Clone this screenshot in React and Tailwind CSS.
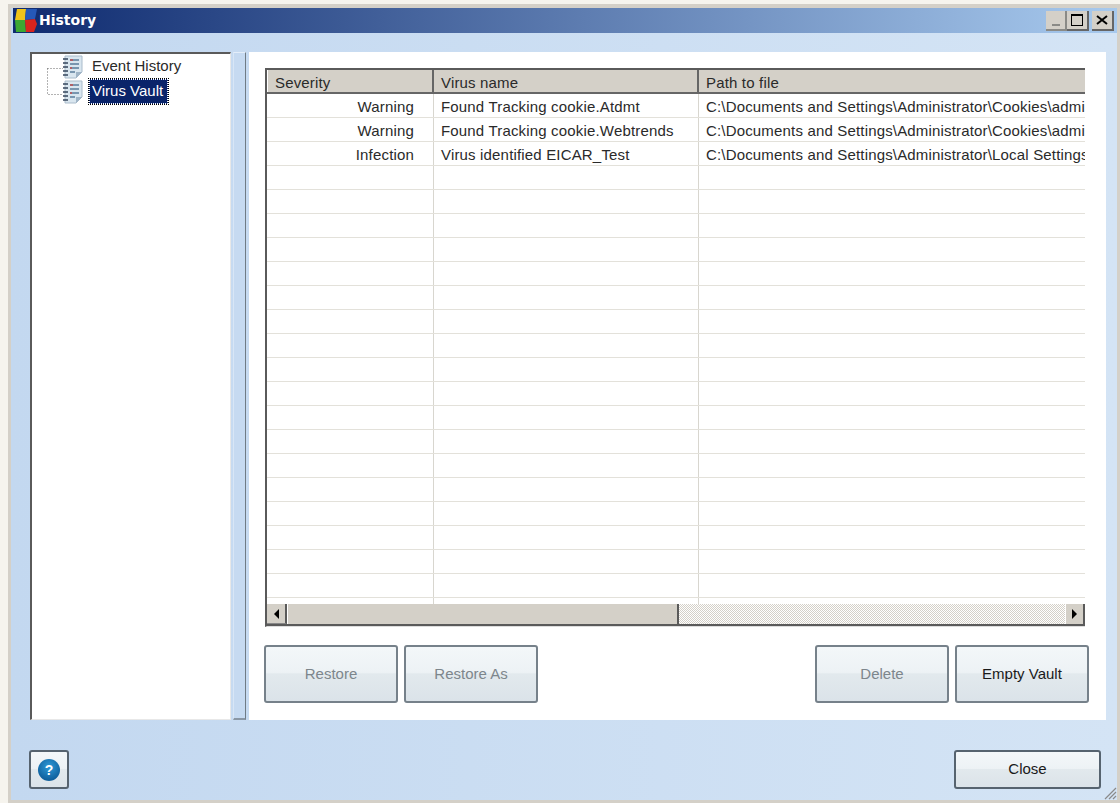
import { useState } from 'react'

const rows = [
    { severity: 'Warning', name: 'Found Tracking cookie.Atdmt', path: 'C:\\Documents and Settings\\Administrator\\Cookies\\admi' },
    { severity: 'Warning', name: 'Found Tracking cookie.Webtrends', path: 'C:\\Documents and Settings\\Administrator\\Cookies\\admi' },
    { severity: 'Infection', name: 'Virus identified EICAR_Test', path: 'C:\\Documents and Settings\\Administrator\\Local Settings' },
]

const emptyRows = Array.from({ length: 19 }, (_, i) => i)

const glossy = 'bg-[linear-gradient(#f3f7f9_0%,#edf2f5_47%,#e2e9ed_50%,#dbe3e9_100%)]'

function NoteIcon() {
    return (
        <svg width="21" height="24" viewBox="0 0 21 24" className="shrink-0">
            <path d="M3 1h17v16l-6 6H3z" fill="#d9e6ef" stroke="#a9bbca" />
            <path d="M14 23v-6h6z" fill="#9fb4c6" />
            <path d="M8 5h9M8 9h9M8 13h9M8 17h5" stroke="#5a7c9a" strokeWidth="1.4" />
            <path d="M8 5h3M8 13h2" stroke="#c25050" strokeWidth="1.4" />
            <path d="M1 4h5M1 8h5M1 12h5M1 16h5M1 20h5" stroke="#34465c" strokeWidth="1.6" />
        </svg>
    )
}

function Logo() {
    return (
        <svg width="22" height="23" viewBox="0 0 22 23" className="shrink-0">
            <path d="M2 0h9l-1 11H0z" fill="#f0c419" />
            <path d="M11 0h11l-2 10-10 1z" fill="#2558b8" />
            <path d="M0 11h10l1 12H1z" fill="#3ca832" />
            <path d="M10 11l10-1 2 5-3 8h-8z" fill="#d9241e" />
        </svg>
    )
}

function ActionButton({ label, disabled }) {
    return (
        <button className={`w-[134px] h-[58px] rounded-[3px] border-2 border-[#76818a] ${glossy} text-[15px] ${disabled ? 'text-[#7d868c]' : 'text-[#1a1a1a]'}`}>
            {label}
        </button>
    )
}

export default function App() {
    const [selected, setSelected] = useState('Virus Vault')

    return (
        <div className="w-[1120px] h-[803px] overflow-hidden bg-[#f6f4ee] pt-1 pl-2 font-['Liberation_Sans',sans-serif] text-[15px] text-[#2a2a2a]">
            <div className="w-[1112px] h-[799px] flex flex-col bg-[#d4d0c8] pt-1 pl-[3px] pr-[3px] pb-[3px]">
                <div className="flex-1 flex flex-col bg-[linear-gradient(90deg,#c3d8f0,#d4e4f5)] relative min-h-0">
                    {/* Title bar */}
                    <div className="h-[25px] ml-[2px] flex items-center justify-between bg-[linear-gradient(90deg,#0e2a6f_0%,#a8caee_100%)]">
                        <div className="flex items-center pl-[2px]">
                            <Logo />
                            <span className="ml-[2px] font-['DejaVu_Sans',sans-serif] font-bold text-[14px] text-white">History</span>
                        </div>
                        <div className="flex items-center mr-[3px] gap-[3px]">
                            <div className="flex">
                                <div className="w-[21px] h-[20px] bg-[#d4d0c8] border-r-2 border-b-2 border-[#8a8a86] flex items-end justify-center pb-[3px]">
                                    <div className="w-[8px] h-[2px] bg-[#8a8a86]" />
                                </div>
                                <div className="w-[22px] h-[20px] bg-[#d4d0c8] border-r-2 border-b-2 border-[#666] flex items-center justify-center">
                                    <div className="w-[12px] h-[12px] border border-t-2 border-black" />
                                </div>
                            </div>
                            <div className="w-[22px] h-[20px] bg-[#d4d0c8] border-r-2 border-b-2 border-[#666] flex items-center justify-center">
                                <svg width="12" height="10" viewBox="0 0 12 10">
                                    <path d="M1 1l10 8M11 1l-10 8" stroke="#000" strokeWidth="2" />
                                </svg>
                            </div>
                        </div>
                    </div>

                    {/* Panels */}
                    <div className="flex mt-[19px] ml-[19px] h-[668px]">
                        <div className="w-[201px] relative bg-white border-t-2 border-l-2 border-[#5a5a5a] border-b border-r border-b-[#e8e8e8] border-r-[#e8e8e8] pl-[30px]">
                            <svg width="20" height="40" className="absolute left-[15px] top-[14px]">
                                <path d="M0.5 0.5H16M0.5 0.5V26.5H16" fill="none" stroke="#666" strokeDasharray="1 2" />
                            </svg>
                            {['Event History', 'Virus Vault'].map(item => (
                                <div key={item} className="flex items-center h-[25px] relative cursor-default" onClick={() => setSelected(item)}>
                                    <NoteIcon />
                                    <span className={`ml-[6px] h-[25px] leading-[22px] pl-[2px] pr-[4px] ${selected === item ? 'bg-[#0a246a] text-white border border-dotted border-white outline-1 outline-dotted outline-black' : 'border border-transparent'}`}>
                                        {item}
                                    </span>
                                </div>
                            ))}
                        </div>
                        <div className="w-[2px]" />
                        <div className="w-[13px] bg-[#c6daf1] border-t border-t-[#e4eefa] border-x border-l-[#d8e6f6] border-r-[#6f7b85] border-b-2 border-b-[#8a97a5]" />
                        <div className="w-[3px]" />
                        <div className="w-[857px] bg-white pl-[16px] pt-[16px] flex flex-col">
                            {/* Grid */}
                            <div className="w-[820px] h-[559px] border-t-2 border-l-2 border-[#5a5a5a] border-b border-b-[#ddd] flex flex-col overflow-hidden tracking-[0.17px]">
                                <div className="h-[24px] shrink-0 flex bg-[#d4d0c8] border-b-2 border-b-[#666]">
                                    <div className="w-[167px] pl-[7px] leading-[25px] border-r-2 border-r-[#666] border-l border-l-white">Severity</div>
                                    <div className="w-[265px] pl-[7px] leading-[25px] border-r-2 border-r-[#666]">Virus name</div>
                                    <div className="flex-1 pl-[7px] leading-[25px]">Path to file</div>
                                </div>
                                <div className="flex-1 min-h-0 overflow-hidden">
                                    {rows.map(row => (
                                        <div key={row.name} className="h-[24px] flex border-b border-[#e3e1da] leading-[25px]">
                                            <div className="w-[167px] shrink-0 pr-[19px] text-right border-r border-[#d8d6cf]">{row.severity}</div>
                                            <div className="w-[265px] shrink-0 pl-[7px] border-r border-[#d8d6cf]">{row.name}</div>
                                            <div className="flex-1 pl-[7px] whitespace-nowrap overflow-hidden">{row.path}</div>
                                        </div>
                                    ))}
                                    {emptyRows.map(i => (
                                        <div key={i} className="h-[24px] flex border-b border-[#e3e1da]">
                                            <div className="w-[167px] shrink-0 border-r border-[#d8d6cf]" />
                                            <div className="w-[265px] shrink-0 border-r border-[#d8d6cf]" />
                                            <div className="flex-1" />
                                        </div>
                                    ))}
                                </div>
                                <div className="h-[22px] shrink-0 flex bg-[repeating-conic-gradient(#d4d0c8_0_25%,#fff_0_50%)] bg-[length:2px_2px] border-b-2 border-b-[#5a5a5a]">
                                    <div className="w-[20px] bg-[#d4d0c8] border-r-2 border-b border-r-[#5a5a5a] border-b-[#888] flex items-center justify-center">
                                        <div className="w-0 h-0 border-y-[5px] border-y-transparent border-r-[5px] border-r-black" />
                                    </div>
                                    <div className="w-[392px] bg-[#d4d0c8] border-l border-l-white border-r-2 border-r-[#5a5a5a]" />
                                    <div className="flex-1" />
                                    <div className="w-[20px] bg-[#d4d0c8] border-r-2 border-r-[#5a5a5a] border-l border-l-white flex items-center justify-center">
                                        <div className="w-0 h-0 border-y-[5px] border-y-transparent border-l-[5px] border-l-black" />
                                    </div>
                                </div>
                            </div>

                            {/* Actions */}
                            <div className="mt-[18px] -ml-px flex justify-between w-[825px]">
                                <div className="flex gap-[6px]">
                                    <ActionButton label="Restore" disabled />
                                    <ActionButton label="Restore As" disabled />
                                </div>
                                <div className="flex gap-[6px]">
                                    <ActionButton label="Delete" disabled />
                                    <ActionButton label="Empty Vault" />
                                </div>
                            </div>
                        </div>
                    </div>

                    {/* Footer */}
                    <div className="flex justify-between items-start mt-[30px] ml-[18px] mr-[16px]">
                        <button className={`w-[40px] h-[39px] rounded-[3px] border-2 border-[#56636f] ${glossy} flex items-center justify-center`}>
                            <div className="w-[22px] h-[22px] rounded-full bg-[radial-gradient(circle_at_50%_35%,#2f9ad8,#0f5f9c_75%,#8aa6ba)] text-white font-bold text-[14px] leading-[22px] text-center">?</div>
                        </button>
                        <button className={`w-[147px] h-[39px] rounded-[3px] border-2 border-[#56636f] ${glossy} text-[15px] text-[#1a1a1a]`}>Close</button>
                    </div>

                    {/* Resize grip */}
                    <svg width="14" height="14" className="absolute right-0 bottom-0">
                        <path d="M13 2L2 13M13 6L6 13M13 10L10 13" stroke="#8a8a8a" strokeWidth="1.2" />
                    </svg>
                </div>
            </div>
        </div>
    )
}
